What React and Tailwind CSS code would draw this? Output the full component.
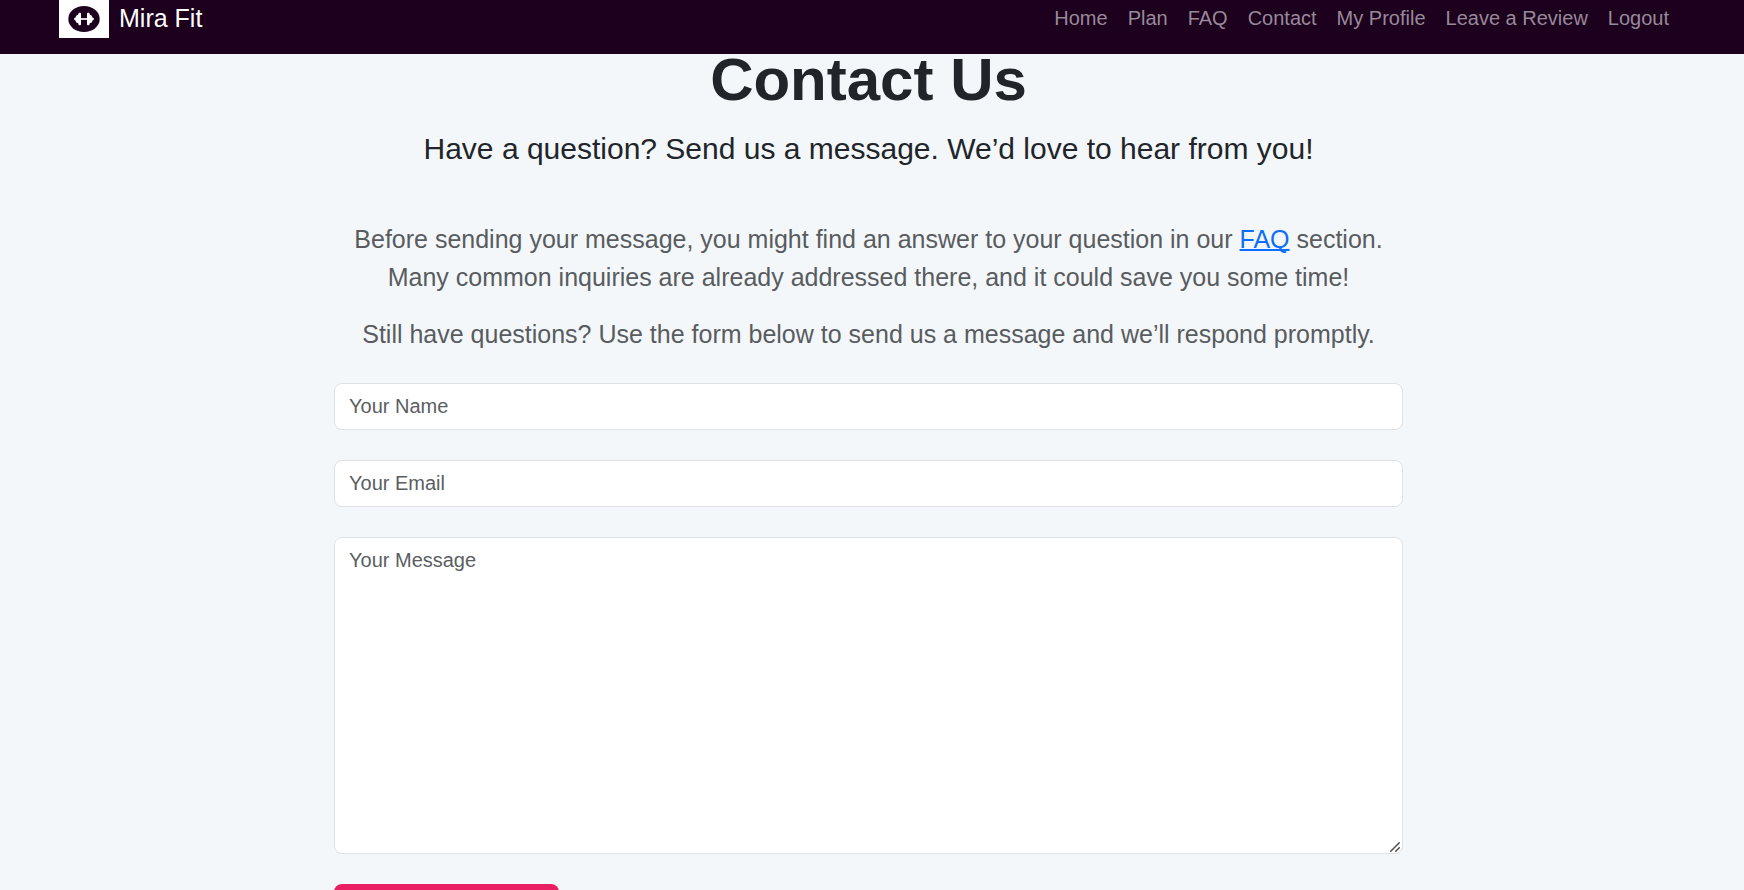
const links = ["Home", "Plan", "FAQ", "Contact", "My Profile", "Leave a Review", "Logout"];

const field =
  "block w-full rounded-lg border border-[#dee2e6] bg-white px-3.5 text-xl leading-[30px] text-[#212529] placeholder:text-[#5a5e62] focus:outline-none focus:ring-4 focus:ring-[#0d6efd]/25";

function Logo() {
  return (
    <svg viewBox="0 0 50 38" className="h-[38px] w-[50px] bg-white" aria-hidden="true">
      <ellipse cx="25" cy="19" rx="15.7" ry="13" fill="#1c001e" />
      <rect x="21" y="18" width="8" height="2" fill="#d9d3da" />
      <g fill="#fff">
        <path d="M22 13.8v10.4q0 1-1 1h-.6q-.9 0-1-1l-.2-1-1.7-.6q-.7-.3-.7-1.1v-.7l-1.3-.8q-1-1 0-2l1.3-.8v-.7q0-.8.7-1.1l1.7-.6.2-1q.1-1 1-1h.6q1 0 1 1z" />
        <path d="M28 13.8v10.4q0 1 1 1h.6q.9 0 1-1l.2-1 1.7-.6q.7-.3.7-1.1v-.7l1.3-.8q1-1 0-2l-1.3-.8v-.7q0-.8-.7-1.1l-1.7-.6-.2-1q-.1-1-1-1h-.6q-1 0-1 1z" />
      </g>
    </svg>
  );
}

export default function App() {
  return (
    <div className="h-screen overflow-y-auto bg-[#f3f7fa] font-['Liberation_Sans',Arial,sans-serif] text-[#212529] [scrollbar-width:none]">
      <header className="flex items-start justify-between bg-[#1c001e] pr-[75px] pb-4 pl-[59px]">
        <a href="#home" className="flex items-start gap-2.5 text-[25px] leading-9 text-white">
          <Logo />
          Mira Fit
        </a>
        <nav className="flex gap-5 text-xl leading-[37px] text-[#978a98]">
          {links.map((label) => (
            <a key={label} href="#" className="hover:text-white">
              {label}
            </a>
          ))}
        </nav>
      </header>
      <main className="mx-auto w-full max-w-[1076px] pr-[7px] pb-10 text-center">
        <h1 className="-mt-2.5 text-[60px] leading-[72px] font-bold">Contact Us</h1>
        <p className="mt-2.5 text-[30px] leading-[45px]">
          Have a question? Send us a message. We’d love to hear from you!
        </p>
        <div className="mt-[49px] text-[25px] leading-[38px] text-[#595c5f]">
          <p>
            Before sending your message, you might find an answer to your question in our{" "}
            <a href="#faq" className="text-[#0d6efd] underline decoration-2 [text-decoration-skip-ink:none]">
              FAQ
            </a>{" "}
            section.
            <br />
            Many common inquiries are already addressed there, and it could save you some time!
          </p>
          <p className="mt-[19px]">
            Still have questions? Use the form below to send us a message and we’ll respond promptly.
          </p>
        </div>
        <form className="mt-[30px] flex flex-col items-start gap-[30px]">
          <input className={`${field} h-[47px]`} type="text" placeholder="Your Name" aria-label="Your Name" />
          <input className={`${field} h-[47px]`} type="email" placeholder="Your Email" aria-label="Your Email" />
          <div className="relative w-full">
            <textarea
              className={`${field} h-[317px] resize-y py-[7px] [&::-webkit-resizer]:hidden`}
              placeholder="Your Message"
              aria-label="Your Message"
            />
            <svg
              viewBox="0 0 10 10"
              className="pointer-events-none absolute right-[3px] bottom-0.5 size-2.5"
              stroke="#505050"
              strokeWidth="1.5"
              aria-hidden="true"
            >
              <path d="M.3 9.7 9.7.3M5.3 9.7l4.4-4.4" />
            </svg>
          </div>
          <button
            type="submit"
            aria-label="Send Message"
            className="h-[48px] w-[225px] rounded-lg bg-[#e91e63]"
          />
        </form>
      </main>
    </div>
  );
}
